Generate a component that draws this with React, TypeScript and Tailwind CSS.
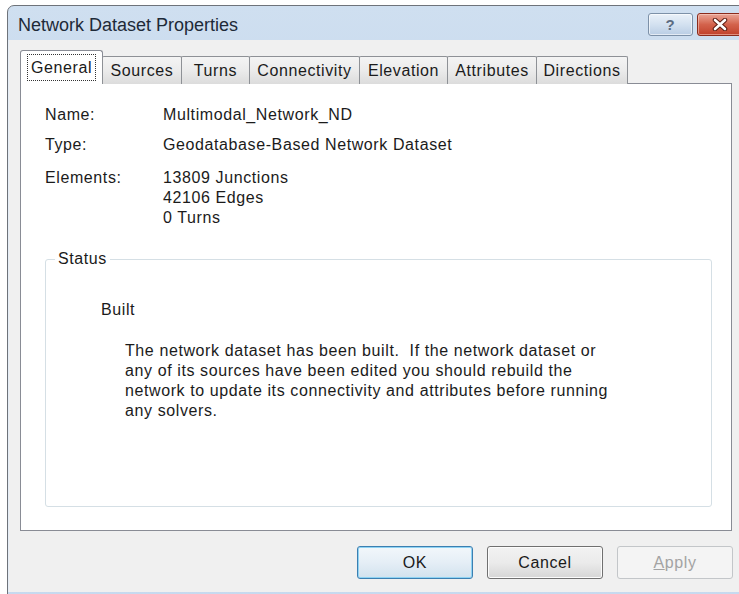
import React from "react";

type Tab = { label: string; width: number };

const tabs: Tab[] = [
  { label: "General", width: 83 },
  { label: "Sources", width: 80 },
  { label: "Turns", width: 69 },
  { label: "Connectivity", width: 111 },
  { label: "Elevation", width: 89 },
  { label: "Attributes", width: 90 },
  { label: "Directions", width: 92 },
];

const statusText = [
  "The network dataset has been built.  If the network dataset or",
  "any of its sources have been edited you should rebuild the",
  "network to update its connectivity and attributes before running",
  "any solvers.",
];

function TitleButtons() {
  return (
    <div className="flex gap-[4px] mt-[7px] mr-[8px]">
      <div className="w-[45px] h-[23px] rounded-[3px] border border-[#7d91a8] bg-gradient-to-b from-[#eaf1f9] via-[#d3e1f0] to-[#b9cde4] flex items-center justify-center shadow-[inset_0_0_0_1px_rgba(255,255,255,0.6)]">
        <span className="text-[15px] font-bold text-[#5c6c82] leading-none">?</span>
      </div>
      <div className="w-[46px] h-[23px] rounded-[3px] border border-[#8a2b1c] bg-gradient-to-b from-[#e9a596] via-[#d3624c] to-[#c0402a] flex items-center justify-center shadow-[inset_0_0_0_1px_rgba(255,220,210,0.5)]">
        <svg width="16" height="13" viewBox="0 0 16 13">
          <path d="M3 2 L13 11 M13 2 L3 11" stroke="#5a1a10" strokeWidth="4.5" strokeLinecap="round" />
          <path d="M3 2 L13 11 M13 2 L3 11" stroke="#ffffff" strokeWidth="2.6" strokeLinecap="round" />
        </svg>
      </div>
    </div>
  );
}

function Tabs() {
  return (
    <div className="relative z-10 -mb-px flex items-end h-[33px]">
      {tabs.map((t, i) =>
        i === 0 ? (
          <div
            key={t.label}
            style={{ width: t.width }}
            className="h-[34px] bg-white border border-b-0 border-[#898c95] rounded-t-[3px] flex items-center justify-center"
          >
            <span className="outline-1 outline-dotted outline-[#333] px-[3px] h-[25px] flex items-center">{t.label}</span>
          </div>
        ) : (
          <div
            key={t.label}
            style={{ width: t.width }}
            className="h-[28px] -ml-px border border-b-0 border-[#8e9196] rounded-t-[2px] bg-gradient-to-b from-[#f4f4f4] via-[#ebebeb] to-[#dcdcdc] flex items-center justify-center"
          >
            {t.label}
          </div>
        )
      )}
    </div>
  );
}

function GeneralPanel() {
  return (
    <div className="w-[712px] h-[448px] bg-white border border-[#898c95] pl-[24px] pt-[21px]">
      <div className="flex leading-[20px]">
        <div className="w-[118px]">Name:</div>
        <div>Multimodal_Network_ND</div>
      </div>
      <div className="flex leading-[20px] mt-[10px]">
        <div className="w-[118px]">Type:</div>
        <div>Geodatabase-Based Network Dataset</div>
      </div>
      <div className="flex leading-[20px] mt-[13px]">
        <div className="w-[118px]">Elements:</div>
        <div>
          <div>13809 Junctions</div>
          <div>42106 Edges</div>
          <div>0 Turns</div>
        </div>
      </div>
      <fieldset className="mt-[21px] w-[667px] h-[258px] border border-[#d5dfe5] rounded-[3px]">
        <legend className="ml-[9px] px-[3px] leading-[20px]">Status</legend>
        <div className="pl-[55px] pt-[31px]">
          <div className="leading-[20px]">Built</div>
          <div className="mt-[21px] ml-[24px] leading-[20px]">
            {statusText.map((line) => (
              <div key={line} className="whitespace-pre">
                {line}
              </div>
            ))}
          </div>
        </div>
      </fieldset>
    </div>
  );
}

function DialogButton({
  children,
  kind,
}: {
  children: React.ReactNode;
  kind: "default" | "normal" | "disabled";
}) {
  const cls =
    kind === "default"
      ? "border-[#3c7fb1] bg-gradient-to-b from-[#f2f7fb] via-[#e5eef6] to-[#d2e2ee] shadow-[inset_0_0_0_1px_#8fd3f3] text-[#1a1a1a]"
      : kind === "normal"
      ? "border-[#707070] bg-gradient-to-b from-[#f2f2f2] via-[#ebebeb] to-[#d6d6d6] shadow-[inset_0_0_0_1px_#fcfcfc] text-[#1a1a1a]"
      : "border-[#c3c6c9] bg-[#f4f4f4] text-[#a3a3a3]";
  return (
    <div className={`h-[33px] w-[116px] rounded-[3px] border flex items-center justify-center ${cls}`}>
      {children}
    </div>
  );
}

export default function App() {
  return (
    <div
      className="w-[739px] h-[594px] overflow-hidden bg-white pt-[5px] pl-[7px] text-[16px] tracking-[0.6px] text-[#1b1b1b]"
      style={{ fontFamily: '"Liberation Sans", Arial, sans-serif' }}
    >
      <div className="w-[745px] h-[600px] rounded-t-[7px] border border-[#6e737a] bg-gradient-to-b from-[#cfdff0] via-[#bcd2ea] to-[#c7daef] flex flex-col">
        <div className="h-[34px] flex items-start justify-between">
          <div className="pl-[10px] pt-[6px] text-[18px] tracking-normal text-[#1e2a38]">Network Dataset Properties</div>
          <TitleButtons />
        </div>
        <div className="h-[552px] bg-[#f0f0f0] border-l border-[#e6eef7] pl-[11px] pt-[11px]">
          <Tabs />
          <GeneralPanel />
          <div className="flex gap-[14px] mt-[15px] ml-[337px]">
            <DialogButton kind="default">OK</DialogButton>
            <DialogButton kind="normal">Cancel</DialogButton>
            <DialogButton kind="disabled">
              <span>
                <span className="underline">A</span>pply
              </span>
            </DialogButton>
          </div>
        </div>
      </div>
    </div>
  );
}
